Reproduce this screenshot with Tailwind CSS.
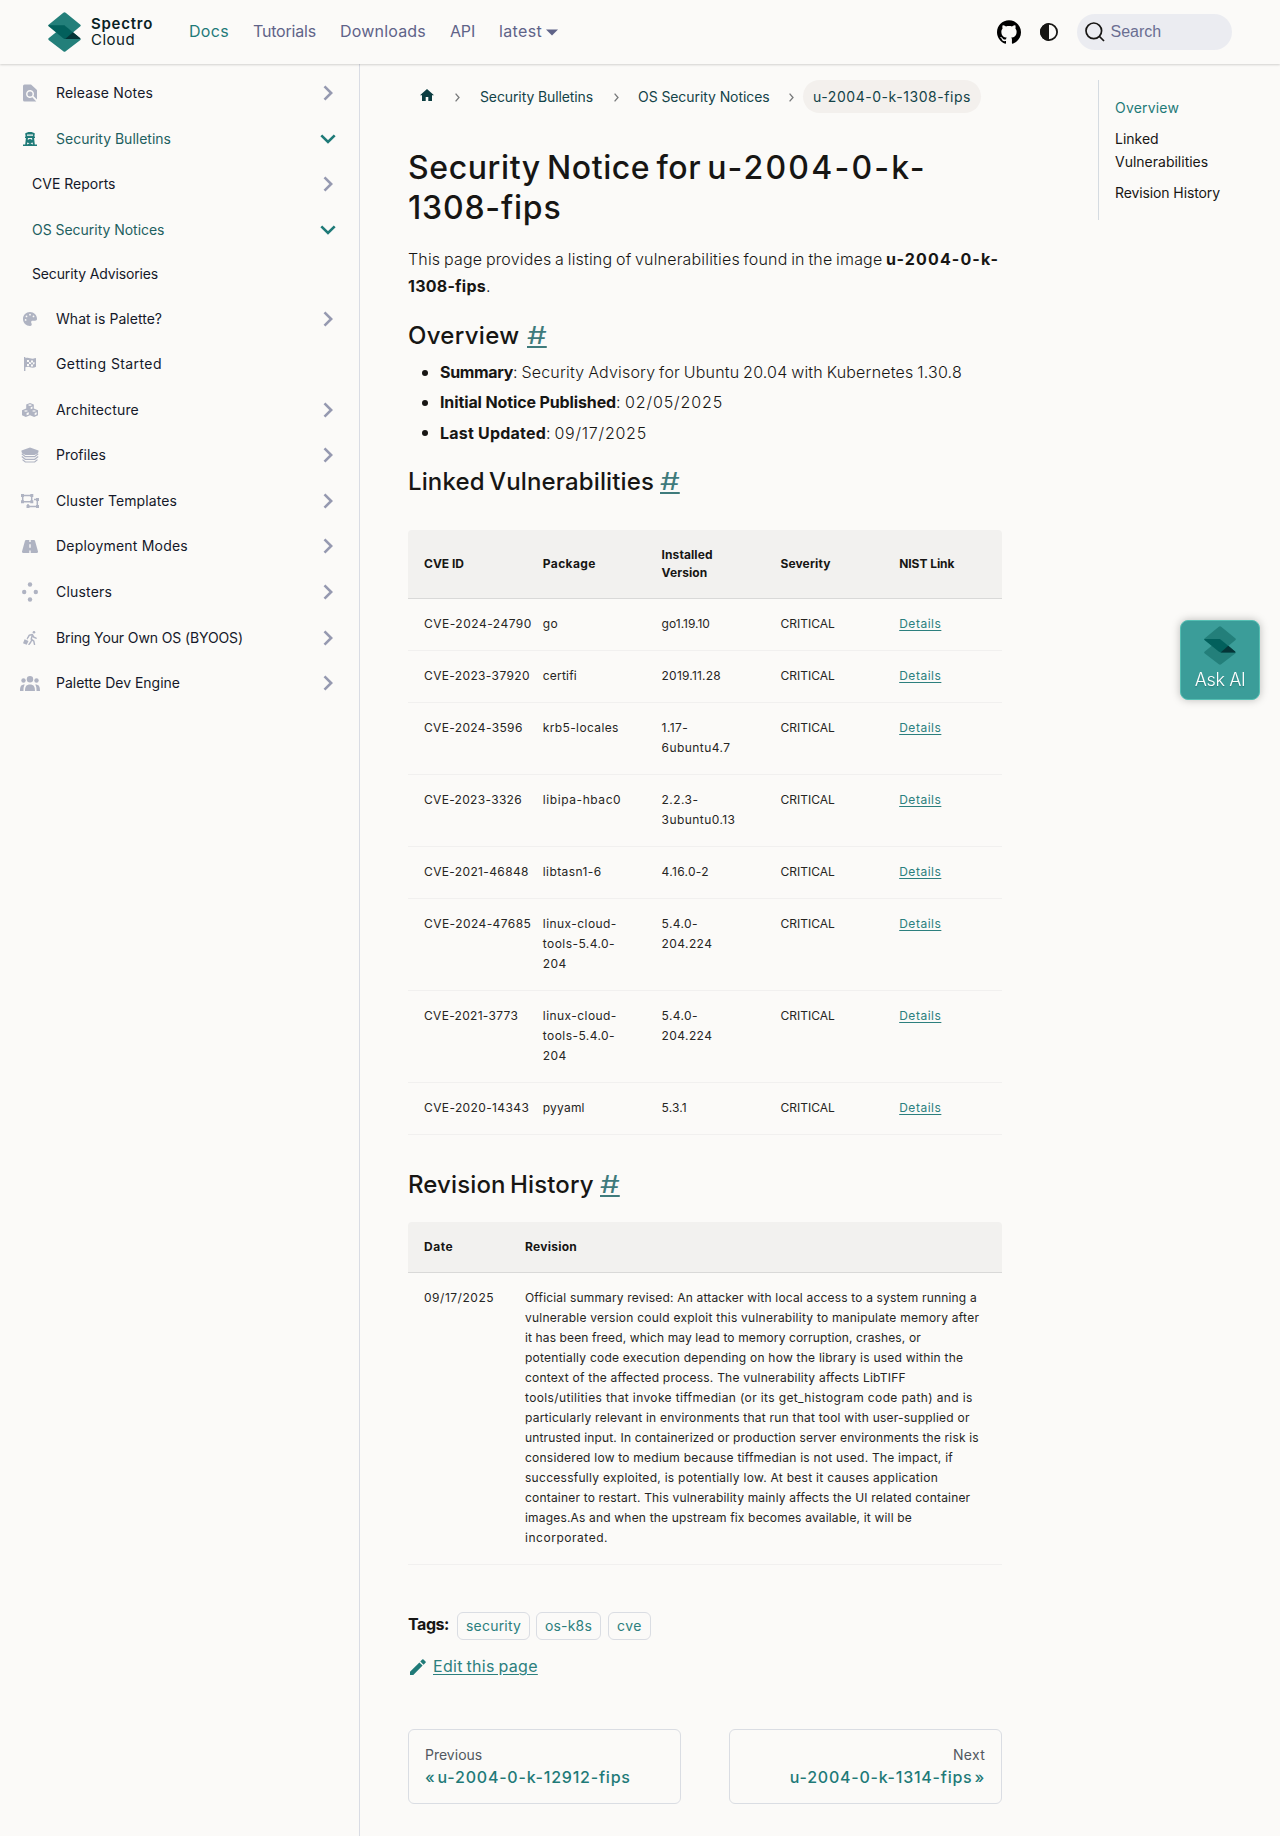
<!DOCTYPE html>
<html lang="en">
<head>
<meta charset="utf-8">
<title>Security Notice for u-2004-0-k-1308-fips | Spectro Cloud</title>
<script src="https://cdn.jsdelivr.net/npm/@tailwindcss/browser@4"></script>
</head>
<body class="flex h-[1836px] flex-col overflow-hidden bg-[#fbfaf8] font-['Inter',sans-serif] text-[#171614]">
<svg class="hidden">
  <symbol id="right" viewBox="0 0 10 16"><path d="M1.5 1.3 8.2 8l-6.7 6.7" fill="none" stroke="currentColor" stroke-width="2.6"/></symbol>
  <symbol id="down" viewBox="0 0 16 10"><path d="M1.3 1.3 8 8l6.700-6.700" fill="none" stroke="currentColor" stroke-width="2.6"/></symbol>
  <symbol id="logo" viewBox="0 0 96 118"><path fill="#237f7a" d="M44.500 2q3.500-3 7 0L94 37q4 3 0 6L72 61 48 41H2q-4 0 0-4z"/><path fill="#237f7a" d="M2 77l22-18 26 20h44q4 2 0 4l-42.500 33q-3.500 3-7 0L2 83q-4-3 0-6z"/><path fill="#02605c" d="M1 39h47l24 20 22 19.500-1 1.500H50q-3 0-6-2.500L0 41.500z"/><path fill="#053537" d="M73 60l21 17q3 3-1 3H50z"/></symbol>
</svg>

<header class="relative z-10 flex h-16 shrink-0 items-center pr-12 pl-12 text-base text-[#5f6388] shadow-[0_1px_2px_rgba(0,0,0,0.16)]">
  <a class="flex items-center"><svg class="h-10 w-[33px]"><use href="#logo"/></svg>
    <span class="ml-[10px] flex w-[63px] flex-col text-[15px] leading-4 text-[#0a2224]"><span class="font-semibold tracking-[0.75px]">Spectro</span><span class="tracking-[0.5px]">Cloud</span></span></a>
  <nav class="-mt-[3px] ml-[35px] flex items-center gap-6">
    <a class="w-10 tracking-[0.32px] text-[#1f7a78]">Docs</a>
    <a class="w-[63px] tracking-[-0.19px]">Tutorials</a>
    <a class="w-[86px] tracking-[0.19px]">Downloads</a>
    <a class="w-[25px] tracking-[-0.19px]">API</a>
    <a class="flex items-center gap-1 tracking-[0.34px]">latest<svg class="mt-1 h-[7px] w-3" viewBox="0 0 12 7"><path fill="currentColor" d="M0 .5h12L6 6.500z"/></svg></a>
  </nav>
  <div class="ml-auto flex items-center">
    <svg class="size-6" viewBox="0 0 24 24"><path fill="#000" d="M12 .297c-6.630 0-12 5.373-12 12 0 5.303 3.438 9.800 8.205 11.385.6.113.82-.258.82-.577 0-.285-.01-1.040-.015-2.040-3.338.724-4.042-1.610-4.042-1.610C4.422 18.070 3.633 17.700 3.633 17.700c-1.087-.744.084-.729.084-.729 1.205.084 1.838 1.236 1.838 1.236 1.070 1.835 2.809 1.305 3.495.998.108-.776.417-1.305.76-1.605-2.665-.3-5.466-1.332-5.466-5.930 0-1.310.465-2.380 1.235-3.220-.135-.303-.54-1.523.105-3.176 0 0 1.005-.322 3.300 1.230.96-.267 1.980-.399 3-.405 1.020.006 2.040.138 3 .405 2.280-1.552 3.285-1.230 3.285-1.230.645 1.653.24 2.873.12 3.176.765.84 1.230 1.910 1.230 3.220 0 4.610-2.805 5.625-5.475 5.920.42.36.81 1.096.81 2.220 0 1.606-.015 2.896-.015 3.286 0 .315.21.69.825.57C20.565 22.092 24 17.592 24 12.297c0-6.627-5.373-12-12-12"/></svg>
    <svg class="ml-[19px] size-[18px]" viewBox="0 0 18 18"><circle cx="9" cy="9" r="8.100" fill="none" stroke="#171614" stroke-width="1.800"/><path fill="#171614" d="M9 0a9 9 0 0 0 0 18z"/></svg>
    <div class="ml-[19px] flex h-9 w-[155px] items-center gap-[5.500px] rounded-full bg-[#ebecf1] pl-2">
      <svg class="size-5" viewBox="0 0 20 20" fill="none" stroke="#171614" stroke-width="1.700"><circle cx="8.800" cy="8.800" r="7.800"/><path d="m14.500 14.500 4.500 4.500"/></svg>
      <span class="font-['Liberation_Sans',sans-serif] text-[#6a6e91]">Search</span>
    </div>
  </div>
</header>

<div class="flex min-h-0 grow">
  <aside class="w-[360px] shrink-0 border-r border-[#d9dce4] pt-[6.500px] text-sm text-[#141829]">
    <a class="flex h-[45.500px] items-center pr-[25px]"><span class="flex w-14 justify-center pl-1"><svg class="h-[18px] w-[14px] text-[#afb3c2]" viewBox="0 0 14 18"><path fill="currentColor" fill-rule="evenodd" d="M1.500.5H8l6 5.500v9.500L10.500 12a4 4 0 1 0-1.200 1.300l4 4.200H1.500A1.500 1.500 0 0 1 0 16V2A1.500 1.500 0 0 1 1.500.5zM7 7.500a2.500 2.500 0 1 1 0 5 2.500 2.500 0 0 1 0-5z"/></svg></span><span class="tracking-[0.16px]">Release Notes</span><span class="ml-auto flex w-3 justify-center text-[#9599b0]"><svg class="h-4 w-[10px]"><use href="#right"/></svg></span></a>
    <a class="flex h-[45.500px] items-center pr-[25px] text-[#1d605f]"><span class="flex w-14 justify-center pl-1"><svg class="size-[14px] text-[#1f7a78]" viewBox="0 0 14 14"><path fill="currentColor" fill-rule="evenodd" d="M2 1.800C3 .6 5 0 7 0s4 .6 5 1.800L11.500 3v1.800h.5V6h-.9l.7 6.500H14V14H0v-1.500h2.200L2.900 6H2V4.800h.5V3zM4 2.500v1.300h6V2.500zM5 6l-.3 2L7 6.800 9.300 8 9 6zM4.200 10.500l-.2 2 2.600-1.300zm5.400 0-2.200.7L10 12.500z"/></svg></span><span>Security Bulletins</span><span class="-mr-[2px] ml-auto text-[#1f7a78]"><svg class="h-[10px] w-4"><use href="#down"/></svg></span></a>
    <a class="flex h-[45.500px] items-center pr-[25px] pl-8"><span>CVE Reports</span><span class="ml-auto flex w-3 justify-center text-[#9599b0]"><svg class="h-4 w-[10px]"><use href="#right"/></svg></span></a>
    <a class="flex h-[45.500px] items-center pr-[23px] pl-8 text-[#1d605f]"><span class="tracking-[-0.03px]">OS Security Notices</span><span class="ml-auto text-[#1f7a78]"><svg class="h-[10px] w-4"><use href="#down"/></svg></span></a>
    <a class="flex h-11 items-center pb-0.5 pl-8"><span class="tracking-[-0.14px]">Security Advisories</span></a>
    <a class="flex h-[45.500px] items-center pr-[25px]"><span class="flex w-14 justify-center pl-1"><svg class="size-[14px] text-[#afb3c2]" viewBox="0 0 512 512"><path fill="currentColor" d="M512 256c0 .9 0 1.800 0 2.700c-.4 36.500-33.600 61.300-70.100 61.300L344 320c-26.500 0-48 21.500-48 48c0 3.400 .4 6.700 1 9.900c2.100 10.200 6.500 20 10.800 29.900c6.100 13.800 12.100 27.500 12.100 42c0 31.800-21.600 60.700-53.400 62c-3.500 .1-7 .2-10.600 .2C114.600 512 0 397.400 0 256S114.600 0 256 0S512 114.600 512 256zM128 288a32 32 0 1 0 -64 0 32 32 0 1 0 64 0zm0-96a32 32 0 1 0 0-64 32 32 0 1 0 0 64zM288 96a32 32 0 1 0 -64 0 32 32 0 1 0 64 0zm96 96a32 32 0 1 0 0-64 32 32 0 1 0 0 64z"/></svg></span><span class="tracking-[0.03px]">What is Palette?</span><span class="ml-auto flex w-3 justify-center text-[#9599b0]"><svg class="h-4 w-[10px]"><use href="#right"/></svg></span></a>
    <a class="flex h-[45.500px] items-center pb-px"><span class="flex w-14 justify-center pl-1"><svg class="size-[14px] text-[#afb3c2]" viewBox="0 0 14 14"><path fill="currentColor" fill-rule="evenodd" d="M1 0h1.400v1.200C4 .5 5.500.6 7 1.200s3.500.8 5.200-.2q.8-.2.8.6v8.200c-2 1.200-4 1.200-6 .5s-3-.6-4.600 0V14H1zM4 3v2h2V3zm4 .5v2h2v-2zM6 5v2h2V5.500zM4 7v2h2V7zm4 .5v2h2v-2zM10 5.500v2l1.500-.4v-2z"/></svg></span><span class="tracking-[0.41px]">Getting Started</span></a>
    <a class="flex h-[45.500px] items-center pr-[25px]"><span class="flex w-14 justify-center pl-1"><svg class="h-[14px] w-4 text-[#afb3c2]" viewBox="0 0 16 14"><path fill="currentColor" fill-rule="evenodd" d="M8 0l3.800 1.400v4L16 7.200v5L12.200 14 8 12.300 3.800 14 0 12.200v-5l4.200-1.800v-4zM5.800 2.100 8 2.900l2.200-.8L8 1.300zM8.700 4.200v2l1.800-.7v-2zM1.700 8l2.200.8L6.200 8 4 7.200zm8.100 0 2.200.8 2.300-.8-2.300-.8zM4.600 10.100v2.200l2.200-.9V9.200zm8.100 0v2.200l2-1V9.200z"/></svg></span><span class="tracking-[0.16px]">Architecture</span><span class="ml-auto flex w-3 justify-center text-[#9599b0]"><svg class="h-4 w-[10px]"><use href="#right"/></svg></span></a>
    <a class="flex h-[45.500px] items-center pr-[25px] pb-px"><span class="flex w-14 justify-center pl-1"><svg class="h-4 w-[18px] text-[#afb3c2]" viewBox="0 0 18 16"><path fill="currentColor" d="M9 .5 17.500 3.500Q18 5 16.500 6.500L13.500 8h-9l-3-1.500Q0 5 .5 3.500z"/><g fill="none" stroke="currentColor" stroke-width="1.200"><path d="M.8 6.800 4.300 9.600h9.400l3.500-2.800M.8 9.600l3.500 2.700h9.400l3.500-2.700M1.500 12.600 4.300 15h9.400l2.800-2.400"/></g></svg></span><span>Profiles</span><span class="ml-auto flex w-3 justify-center text-[#9599b0]"><svg class="h-4 w-[10px]"><use href="#right"/></svg></span></a>
    <a class="flex h-[45.500px] items-center pr-[25px]"><span class="flex w-14 justify-center pl-1"><svg class="h-[14px] w-[18px] text-[#afb3c2]" viewBox="0 0 18 14"><g fill="none" stroke="currentColor" stroke-width="1.500"><path d="M1.700 1.500h9v6.300h-9zM13 5.500h3.300v7H7V10"/></g><path fill="currentColor" d="M0 0h3v3H0zM9.300 0h3v3h-3zM0 6.300h3v3H0zM9.300 6.300h3v3h-3zM15 4h3v3h-3zM15 11h3v3h-3zM5.500 11h3v3h-3z"/></svg></span><span class="tracking-[0.1px]">Cluster Templates</span><span class="ml-auto flex w-3 justify-center text-[#9599b0]"><svg class="h-4 w-[10px]"><use href="#right"/></svg></span></a>
    <a class="flex h-[45.500px] items-center pr-[25px] pb-px"><span class="flex w-14 justify-center pl-1"><svg class="h-[13px] w-4 text-[#afb3c2]" viewBox="0 0 16 13"><path fill="currentColor" d="M4 0h3.300v2h1.400V0H12q.8 0 1 .7l3 10.800q.2 1.500-1.300 1.500h-6v-2.500H7.300V13h-6Q-.2 13 0 11.500L3 .7Q3.200 0 4 0zm3.300 4.300v3.500h1.400V4.300z" fill-rule="evenodd"/></svg></span><span class="tracking-[0.21px]">Deployment Modes</span><span class="ml-auto flex w-3 justify-center text-[#9599b0]"><svg class="h-4 w-[10px]"><use href="#right"/></svg></span></a>
    <a class="flex h-[45.500px] items-center pr-[25px]"><span class="flex w-14 justify-center pl-1"><svg class="h-5 w-4 text-[#afb3c2]" viewBox="0 0 16 20" fill="currentColor"><circle cx="8" cy="2.500" r="2.200"/><circle cx="2.200" cy="10" r="2.200"/><circle cx="13.800" cy="10" r="2.200"/><circle cx="8" cy="17.500" r="2.200"/></svg></span><span class="tracking-[0.18px]">Clusters</span><span class="ml-auto flex w-3 justify-center text-[#9599b0]"><svg class="h-4 w-[10px]"><use href="#right"/></svg></span></a>
    <a class="flex h-[45.500px] items-center pr-[25px]"><span class="flex w-14 justify-center pl-1"><svg class="size-[14px] text-[#afb3c2]" viewBox="0 0 14 14"><circle cx="11" cy="1.300" r="1.300" fill="currentColor"/><path d="m9.500 3.800-1.300 4.400 2.600 2 .7 3.200M8.800 9 7.500 11.500 6 13.400M5 6.500l1.300-2.300 3-.6 1.700 2.700 2 .8" fill="none" stroke="currentColor" stroke-width="1.500" stroke-linecap="round" stroke-linejoin="round"/><path fill="currentColor" d="M1.600 8.200 5.500 10l-1.800 3.800L0 12.200zM3.500 8l1.200-2 .8.5-1 2z"/></svg></span><span class="tracking-[-0.12px]">Bring Your Own OS (BYOOS)</span><span class="ml-auto flex w-3 justify-center text-[#9599b0]"><svg class="h-4 w-[10px]"><use href="#right"/></svg></span></a>
    <a class="flex h-[45.500px] items-center pr-[25px]"><span class="flex w-14 justify-center pl-1"><svg class="h-[15px] w-5 text-[#afb3c2]" viewBox="0 0 20 15" fill="currentColor"><circle cx="10" cy="3.300" r="3.200"/><circle cx="3.500" cy="4.500" r="2.200"/><circle cx="16.500" cy="4.500" r="2.200"/><path d="M5 15c0-4.500 1.500-6.500 5-6.500s5 2 5 6.500zM0 15c0-4.500 1-6.500 4.800-6.500C3.500 10.500 3.500 12.500 3.500 15zM20 15c0-4.500-1-6.500-4.800-6.500 1.300 2 1.300 4 1.300 6.500z"/></svg></span><span>Palette Dev Engine</span><span class="ml-auto flex w-3 justify-center text-[#9599b0]"><svg class="h-4 w-[10px]"><use href="#right"/></svg></span></a>
  </aside>

  <main class="ml-12 w-[594px] shrink-0 pt-4">
    <nav class="flex h-[33px] items-center text-sm text-[#134348]">
      <svg class="-mt-1 ml-3 h-3 w-[14px]" viewBox="0 0 14 12"><path fill="#0c3d41" d="M7 0l7 6.300h-2V12H8.300V8H5.700v4H2V6.300H0z"/></svg>
      <svg class="mt-px ml-[21px] h-[9px] w-[5px]" viewBox="0 0 5 9"><path d="M.6.6 4 4.500.6 8.400" fill="none" stroke="#77797a" stroke-width="1.300"/></svg>
      <span class="ml-[20px] w-[114px] whitespace-nowrap tracking-[-0.11px]">Security Bulletins</span>
      <svg class="mt-px ml-[20px] h-[9px] w-[5px]" viewBox="0 0 5 9"><path d="M.6.6 4 4.500.6 8.400" fill="none" stroke="#77797a" stroke-width="1.300"/></svg>
      <span class="ml-[19px] w-[132px] whitespace-nowrap tracking-[-0.08px]">OS Security Notices</span>
      <svg class="mt-px ml-[19px] h-[9px] w-[5px]" viewBox="0 0 5 9"><path d="M.6.6 4 4.500.6 8.400" fill="none" stroke="#77797a" stroke-width="1.300"/></svg>
      <span class="ml-[9px] flex h-[33px] w-[178px] items-center rounded-full bg-[#f3f0ed] pl-[10px] tracking-[0.55px] whitespace-nowrap">u-2004-0-k-1308-fips</span>
    </nav>
    <h1 class="mt-[35px] text-[32px] leading-10 font-[450] whitespace-nowrap [word-spacing:-3px]"><span class="tracking-[0.6px]">Security Notice for </span><span class="tracking-[2.200px]">u-2004-0-k-</span><br><span class="tracking-[0.8px]">1308-fips</span></h1>
    <p class="mt-[18px] text-base leading-[27px] font-light whitespace-nowrap"><span class="tracking-[0.18px] [word-spacing:-1px]">This page provides a listing of vulnerabilities found in the image </span><b class="font-bold tracking-[1.130px]">u-2004-0-k-</b><br><b class="font-bold tracking-[0.24px]">1308-fips</b>.</p>
    <h2 class="mt-[21px] flex text-2xl leading-[30px] font-[450]"><span class="w-[119px] tracking-[0.3px]">Overview</span><a class="inline-block origin-left scale-x-130 font-normal text-[#3f7b7c] underline decoration-2 underline-offset-2">#</a></h2>
    <ul class="mt-[8px] ml-8 flex list-none flex-col gap-[3.400px] text-base leading-[27px] font-light whitespace-nowrap">
      <li class="flex items-center"><i class="-ml-[18px] mr-3 h-[6px] w-[6px] rounded-full bg-[#171614]"></i><span><b class="font-bold tracking-[-0.33px]">Summary</b><span class="tracking-[0.2px] [word-spacing:-1px]">: Security Advisory for Ubuntu 20.04 with Kubernetes 1.30.8</span></span></li>
      <li class="flex items-center"><i class="-ml-[18px] mr-3 h-[6px] w-[6px] rounded-full bg-[#171614]"></i><span><b class="font-bold tracking-[-0.12px]">Initial Notice Published</b><span class="tracking-[0.9px] [word-spacing:-2px]">: 02/05/2025</span></span></li>
      <li class="flex items-center"><i class="-ml-[18px] mr-3 h-[6px] w-[6px] rounded-full bg-[#171614]"></i><span><b class="font-bold tracking-[0.21px]">Last Updated</b><span class="tracking-[0.75px] [word-spacing:-2px]">: 09/17/2025</span></span></li>
    </ul>
    <h2 class="mt-[20px] flex text-2xl leading-[30px] font-[450]"><span class="w-[252px] tracking-[0.12px] [word-spacing:-2px]">Linked Vulnerabilities</span><a class="inline-block origin-left scale-x-130 font-normal text-[#3f7b7c] underline decoration-2 underline-offset-2">#</a></h2>

    <div class="mt-[33px] text-xs leading-5 tracking-[0.44px] whitespace-nowrap text-[#262523]">
      <div class="grid h-[69px] grid-cols-5 items-center rounded-t border-b border-[#d9d9d8] bg-[#f2f1ef] leading-[18px] font-bold text-[#171614]">
        <span class="pl-4 tracking-normal">CVE ID</span><span class="pl-4 tracking-[0.38px]">Package</span><span class="pl-4 tracking-[0.09px]">Installed<br>Version</span><span class="pl-4 tracking-[0.15px]">Severity</span><span class="pl-4 tracking-[-0.05px]">NIST Link</span>
      </div>
      <div class="grid h-[52px] grid-cols-5 border-b border-[#f1f0ef] pt-[15px]"><span class="pl-4 tracking-[0.5px]">CVE-2024-24790</span><span class="pl-4">go</span><span class="pl-4 tracking-normal">go1.19.10</span><span class="pl-4 tracking-[0.02px]">CRITICAL</span><a class="pl-4 tracking-[0.52px] text-[#2c7f7e] underline underline-offset-2">Details</a></div>
      <div class="grid h-[52px] grid-cols-5 border-b border-[#f1f0ef] pt-[15px]"><span class="pl-4 tracking-[0.36px]">CVE-2023-37920</span><span class="pl-4 tracking-[0.2px]">certifi</span><span class="pl-4 tracking-[0.2px]">2019.11.28</span><span class="pl-4 tracking-[0.02px]">CRITICAL</span><a class="pl-4 tracking-[0.52px] text-[#2c7f7e] underline underline-offset-2">Details</a></div>
      <div class="grid h-[72px] grid-cols-5 border-b border-[#f1f0ef] pt-[15px]"><span class="pl-4 tracking-[0.35px]">CVE-2024-3596</span><span class="pl-4 tracking-[0.37px]">krb5-locales</span><span class="pl-4">1.17-<br>6ubuntu4.7</span><span class="pl-4 tracking-[0.02px]">CRITICAL</span><a class="pl-4 tracking-[0.52px] text-[#2c7f7e] underline underline-offset-2">Details</a></div>
      <div class="grid h-[72px] grid-cols-5 border-b border-[#f1f0ef] pt-[15px]"><span class="pl-4 tracking-[0.31px]">CVE-2023-3326</span><span class="pl-4 tracking-[0.58px]">libipa-hbac0</span><span class="pl-4">2.2.3-<br>3ubuntu0.13</span><span class="pl-4 tracking-[0.02px]">CRITICAL</span><a class="pl-4 tracking-[0.52px] text-[#2c7f7e] underline underline-offset-2">Details</a></div>
      <div class="grid h-[52px] grid-cols-5 border-b border-[#f1f0ef] pt-[15px]"><span class="pl-4 tracking-[0.36px]">CVE-2021-46848</span><span class="pl-4 tracking-[0.42px]">libtasn1-6</span><span class="pl-4 tracking-[0.3px]">4.16.0-2</span><span class="pl-4 tracking-[0.02px]">CRITICAL</span><a class="pl-4 tracking-[0.52px] text-[#2c7f7e] underline underline-offset-2">Details</a></div>
      <div class="grid h-[92px] grid-cols-5 border-b border-[#f1f0ef] pt-[15px]"><span class="pl-4">CVE-2024-47685</span><span class="pl-4">linux-cloud-<br>tools-5.4.0-<br>204</span><span class="pl-4 tracking-[0.4px]">5.4.0-<br>204.224</span><span class="pl-4 tracking-[0.02px]">CRITICAL</span><a class="pl-4 tracking-[0.52px] text-[#2c7f7e] underline underline-offset-2">Details</a></div>
      <div class="grid h-[92px] grid-cols-5 border-b border-[#f1f0ef] pt-[15px]"><span class="pl-4 tracking-[0.3px]">CVE-2021-3773</span><span class="pl-4">linux-cloud-<br>tools-5.4.0-<br>204</span><span class="pl-4 tracking-[0.4px]">5.4.0-<br>204.224</span><span class="pl-4 tracking-[0.02px]">CRITICAL</span><a class="pl-4 tracking-[0.52px] text-[#2c7f7e] underline underline-offset-2">Details</a></div>
      <div class="grid h-[52px] grid-cols-5 border-b border-[#f1f0ef] pt-[15px]"><span class="pl-4 tracking-[0.38px]">CVE-2020-14343</span><span class="pl-4 tracking-[0.2px]">pyyaml</span><span class="pl-4 tracking-[0.1px]">5.3.1</span><span class="pl-4 tracking-[0.02px]">CRITICAL</span><a class="pl-4 tracking-[0.52px] text-[#2c7f7e] underline underline-offset-2">Details</a></div>
    </div>

    <h2 class="mt-[35px] flex text-2xl leading-[30px] font-[450]"><span class="w-[192px] tracking-[0.12px] [word-spacing:-2px]">Revision History</span><a class="inline-block origin-left scale-x-130 font-normal text-[#3f7b7c] underline decoration-2 underline-offset-2">#</a></h2>
    <div class="mt-[22px] text-xs leading-5 whitespace-nowrap text-[#262523]">
      <div class="grid h-[51px] grid-cols-[101px_1fr] items-center rounded-t border-b border-[#d9d9d8] bg-[#f2f1ef] leading-[18px] font-bold text-[#171614]"><span class="pl-4 tracking-[0.5px]">Date</span><span class="pl-4 tracking-[0.26px]">Revision</span></div>
      <div class="grid h-[292px] grid-cols-[101px_1fr] border-b border-[#f1f0ef] pt-[15px]">
        <span class="pl-4 tracking-[0.52px]">09/17/2025</span>
        <p class="pl-4"><span class="tracking-[0.18px]">Official summary revised: An attacker with local access to a system running a</span><br><span class="tracking-[0.24px]">vulnerable version could exploit this vulnerability to manipulate memory after</span><br><span class="tracking-[0.12px]">it has been freed, which may lead to memory corruption, crashes, or</span><br><span class="tracking-[0.24px]">potentially code execution depending on how the library is used within the</span><br><span class="tracking-[0.23px]">context of the affected process. The vulnerability affects LibTIFF</span><br><span class="tracking-[0.37px]">tools/utilities that invoke tiffmedian (or its get_histogram code path) and is</span><br><span class="tracking-[0.23px]">particularly relevant in environments that run that tool with user-supplied or</span><br><span class="tracking-[0.16px]">untrusted input. In containerized or production server environments the risk is</span><br><span class="tracking-[0.23px]">considered low to medium because tiffmedian is not used. The impact, if</span><br><span class="tracking-[0.28px]">successfully exploited, is potentially low. At best it causes application</span><br><span class="tracking-[0.19px]">container to restart. This vulnerability mainly affects the UI related container</span><br><span class="tracking-[0.18px]">images.As and when the upstream fix becomes available, it will be</span><br><span class="tracking-[0.53px]">incorporated.</span></p>
      </div>
    </div>

    <div class="mt-[47px] flex h-7 items-center text-sm text-[#2c7f7e]">
      <b class="-mt-1 w-[49px] text-base font-bold tracking-[-0.44px] text-[#171614]">Tags:</b>
      <a class="flex h-7 w-[73px] items-center rounded-md border border-[#dadde3] pl-2 tracking-[0.2px]">security</a>
      <a class="ml-[6px] flex h-7 w-[65px] items-center rounded-md border border-[#dadde3] pl-2 tracking-[0.17px]">os-k8s</a>
      <a class="ml-[7px] flex h-7 w-[43px] items-center rounded-md border border-[#dadde3] pl-2 tracking-[0.51px]">cve</a>
    </div>
    <a class="mt-[13px] flex h-[27px] items-center text-base text-[#2c7f7e]"><svg class="mt-0.5 mr-[7px] ml-0.5 size-4" viewBox="0 0 16 16"><path fill="#1f7a78" d="M0 12.700V16h3.300l9.300-9.400-3.200-3.200zM15.500 3.800q.7-.7 0-1.300L13.500.5q-.6-.7-1.300 0l-1.900 1.900 3.300 3.300z"/></svg><span class="tracking-[0.3px] underline underline-offset-2 [word-spacing:-1px]">Edit this page</span></a>
    <div class="mt-[49px] grid h-[75px] grid-cols-2 gap-12 text-base font-medium text-[#1f7a78]">
      <a class="flex flex-col gap-[2px] rounded-md border border-[#dadde3] px-4 pt-4"><span class="text-sm leading-[18px] font-normal text-[#525860]">Previous</span><span class="leading-[22px] tracking-[0.78px] [word-spacing:-3px]">« u-2004-0-k-12912-fips</span></a>
      <a class="flex flex-col items-end gap-[2px] rounded-md border border-[#dadde3] px-4 pt-4"><span class="text-sm leading-[18px] font-normal tracking-[0.27px] text-[#525860]">Next</span><span class="leading-[22px] tracking-[0.76px] [word-spacing:-3px]">u-2004-0-k-1314-fips »</span></a>
    </div>
  </main>

  <nav class="mt-4 ml-24 flex h-[140px] w-[150px] flex-col gap-2 border-l border-[#d5dbe1] pt-4 pl-4 text-sm leading-[23px]">
    <a class="tracking-[0.18px] text-[#1f7a78]">Overview</a><a>Linked<br>Vulnerabilities</a><a class="tracking-[-0.11px]">Revision History</a>
  </nav>
</div>

<button class="fixed top-[620px] left-[1180px] flex h-20 w-20 flex-col items-center rounded-lg border border-[#55bfb3] bg-[#3b9d99] pt-[5px] text-lg leading-6 font-light tracking-[-0.400px] text-white shadow-[0_0_8px_rgba(0,0,0,0.25)] text-shadow-sm"><svg class="h-[39px] w-8"><use href="#logo"/></svg><span class="mt-[3px]">Ask AI</span></button>
</body>
</html>
